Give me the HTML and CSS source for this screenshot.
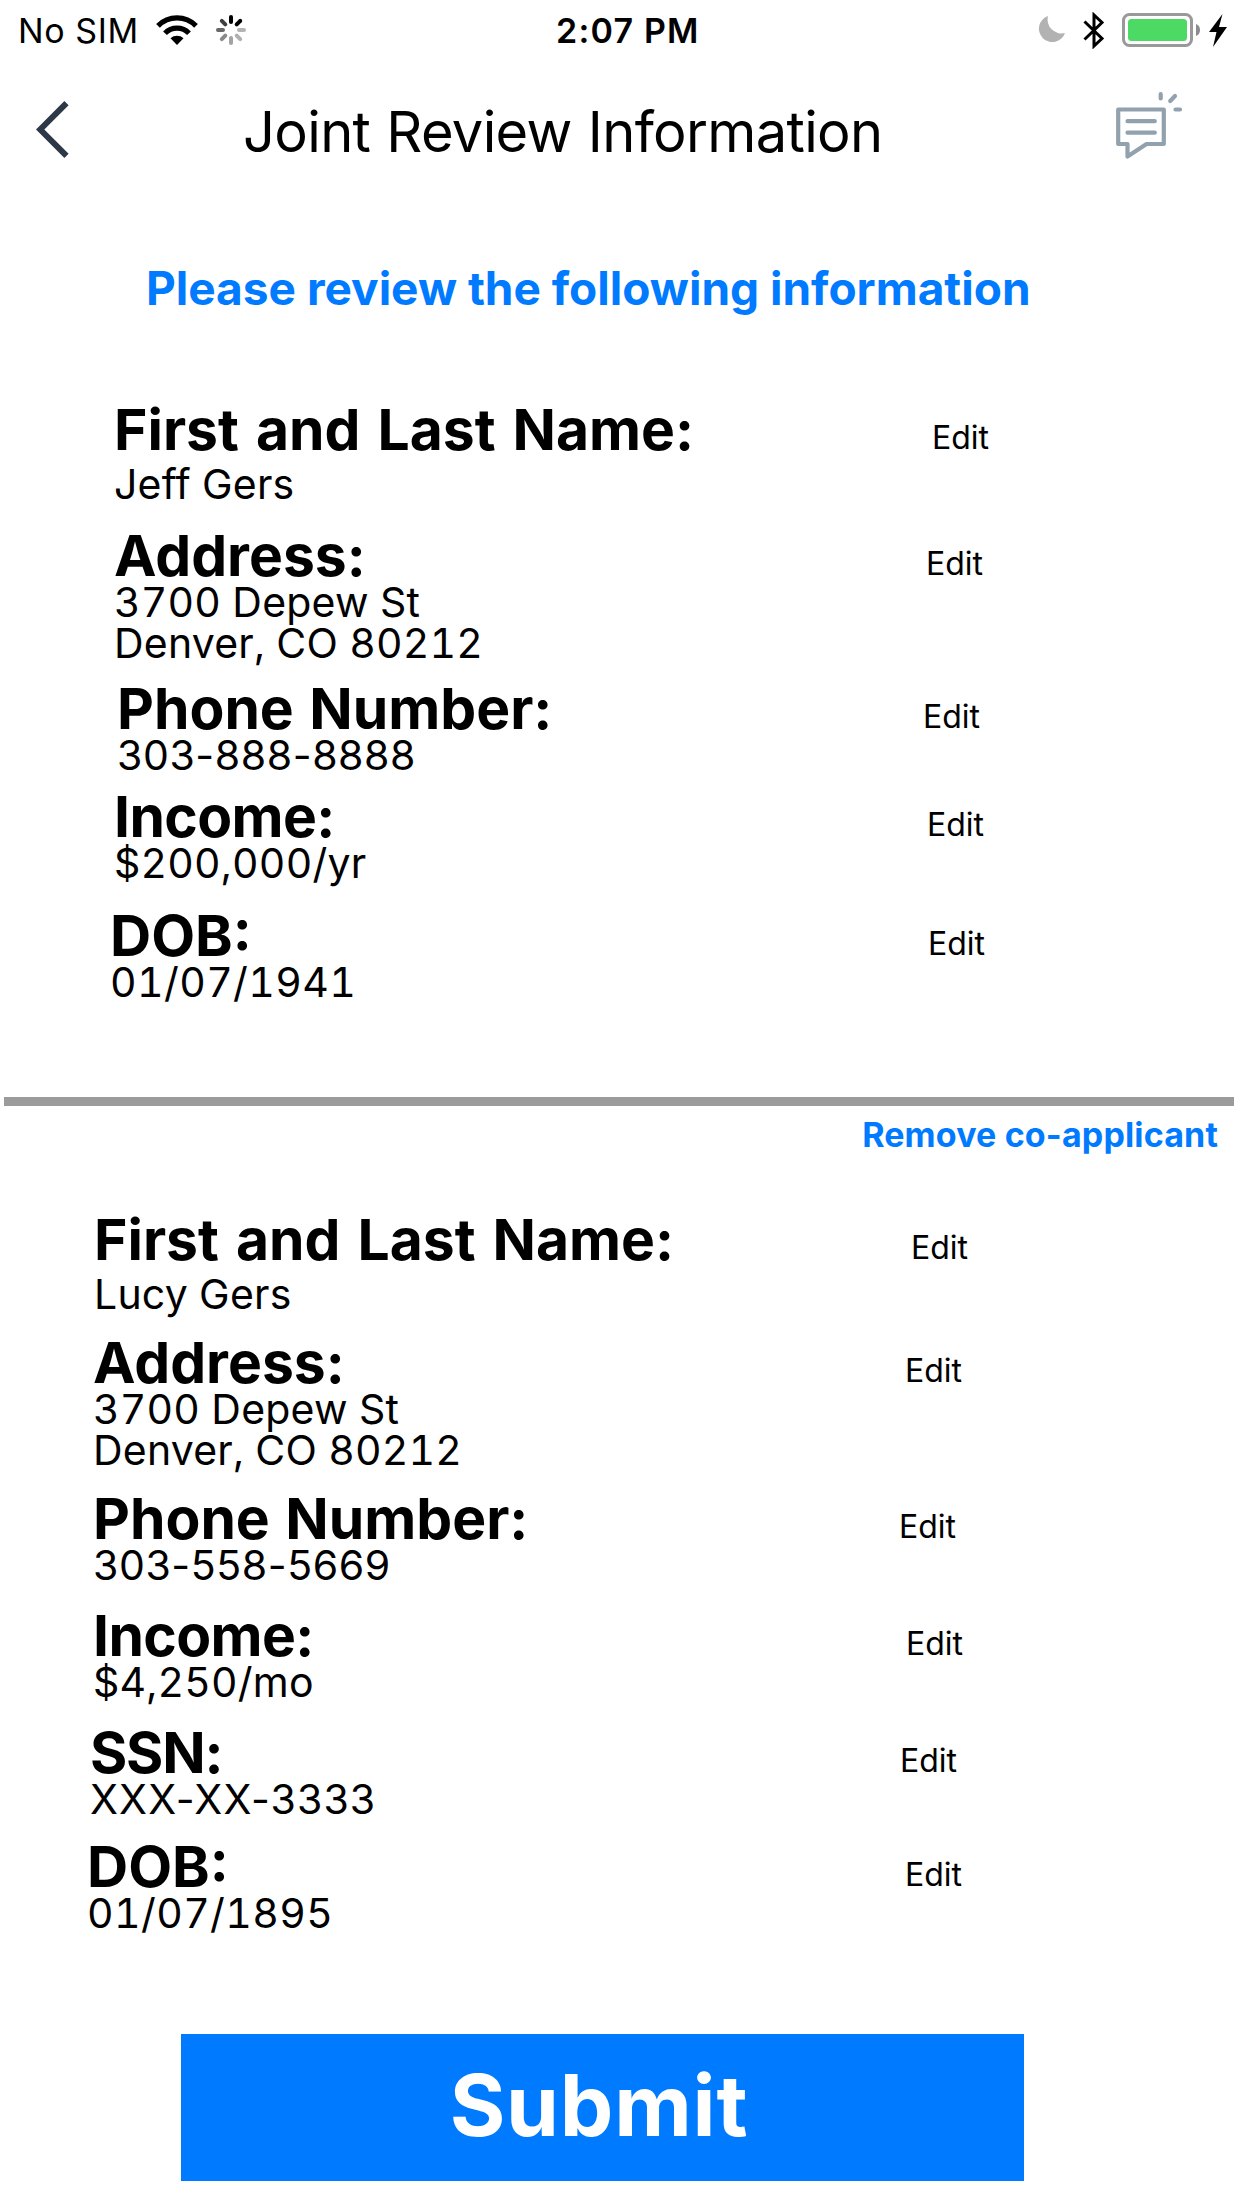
FILE: index.html
```
<!DOCTYPE html>
<html lang="en">
<head>
<meta charset="utf-8">
<title>Joint Review Information</title>
<link rel="stylesheet" href="styles.css">
</head>
<body>
<div class="status">
  <div class="status-left">
    <span class="carrier">No SIM</span>
    <svg class="wifi" width="42" height="30" viewBox="0 0 42 30">
      <g fill="none" stroke="#000" stroke-width="5.2">
        <path d="M2 10.800C12.500 0.200 29.500 0.200 40 10.800"/>
        <path d="M9 18.200C15.500 11.300 26.500 11.300 33 18.200"/>
      </g>
      <path d="M14.500 23.300C18 20 24 20 27.500 23.300L21 30Z"/>
    </svg>
    <svg class="spinner" width="30" height="30" viewBox="0 0 30 30" stroke-width="4" stroke-linecap="round">
      <path d="M15 2V7" stroke="#000"/>
      <path d="M24.200 5.800L20.700 9.300" stroke="#000"/>
      <path d="M23 15H28" stroke="#b4b4b4"/>
      <path d="M20.700 20.700L24.200 24.200" stroke="#b0b0b0"/>
      <path d="M15 23V28" stroke="#a3a3a3"/>
      <path d="M9.300 20.700L5.800 24.200" stroke="#898989"/>
      <path d="M2 15H7" stroke="#686868"/>
      <path d="M5.800 5.800L9.300 9.300" stroke="#404040"/>
    </svg>
  </div>
  <span class="time">2:07 PM</span>
  <div class="status-right">
    <svg class="moon" width="27" height="27" viewBox="0 0 27 27">
      <path d="M10 0A13.400 13.400 0 1 0 27 17A14 14 0 0 1 10 0Z" fill="#b2b2b2"/>
    </svg>
    <svg class="bluetooth" width="22" height="37" viewBox="0 0 22 37">
      <path d="M1.500 9.500L19 26.500L11 34V3L19 10.500L1.500 27.500" fill="none" stroke="#000" stroke-width="3"/>
    </svg>
    <svg class="battery" width="78" height="34" viewBox="0 0 78 34">
      <rect x="1.500" y="1.500" width="68" height="31" rx="6" fill="none" stroke="#999" stroke-width="3"/>
      <rect x="6" y="6" width="59" height="22" rx="3.500" fill="#4cd964"/>
      <path d="M74 11A6.500 6.500 0 0 1 74 23Z" fill="#8c8c8c"/>
    </svg>
    <svg class="bolt" width="18" height="33" viewBox="0 0 18 33">
      <path d="M13.500 0L0 18H7.500L4 33L18 13H10Z"/>
    </svg>
  </div>
</div>

<header class="nav">
  <svg class="back" width="33" height="57" viewBox="0 0 33 57">
    <path d="M30.500 2.200L4.200 28.500L30.500 54.800" fill="none" stroke="#2c3847" stroke-width="6"/>
  </svg>
  <h1 class="title">Joint Review Information</h1>
  <svg class="chat" width="67" height="69" viewBox="0 0 67 69" fill="none" stroke="#92a1ae" stroke-width="4.200" stroke-linecap="round" stroke-linejoin="round">
    <path d="M2.200 18.500H47.800V53H30.500L11.500 65.500V53H2.200Z"/>
    <path d="M11.500 30.200H38.800M11.500 41.700H38.800M44.700 3.200V7.500M54.200 10L59 5M59.500 18.500H64"/>
  </svg>
</header>

<main>
  <h2 class="prompt">Please review the following information</h2>

  <section class="person primary">
    <div class="row name"><div class="info"><h3>First and Last Name:</h3><p>Jeff Gers</p></div><a class="edit">Edit</a></div>
    <div class="row address"><div class="info"><h3>Address:</h3><p>3700 Depew St<br>Denver, CO 80212</p></div><a class="edit">Edit</a></div>
    <div class="row phone"><div class="info"><h3>Phone Number:</h3><p>303-888-8888</p></div><a class="edit">Edit</a></div>
    <div class="row income"><div class="info"><h3>Income:</h3><p>$200,000/yr</p></div><a class="edit">Edit</a></div>
    <div class="row dob"><div class="info"><h3>DOB:</h3><p>01/07/1941</p></div><a class="edit">Edit</a></div>
  </section>

  <hr class="divider">
  <a class="remove">Remove co-applicant</a>

  <section class="person joint">
    <div class="row name"><div class="info"><h3>First and Last Name:</h3><p>Lucy Gers</p></div><a class="edit">Edit</a></div>
    <div class="row address"><div class="info"><h3>Address:</h3><p>3700 Depew St<br>Denver, CO 80212</p></div><a class="edit">Edit</a></div>
    <div class="row phone"><div class="info"><h3>Phone Number:</h3><p>303-558-5669</p></div><a class="edit">Edit</a></div>
    <div class="row income"><div class="info"><h3>Income:</h3><p>$4,250/mo</p></div><a class="edit">Edit</a></div>
    <div class="row ssn"><div class="info"><h3>SSN:</h3><p>XXX-XX-3333</p></div><a class="edit">Edit</a></div>
    <div class="row dob"><div class="info"><h3>DOB:</h3><p>01/07/1895</p></div><a class="edit">Edit</a></div>
  </section>

  <button class="submit" type="button">Submit</button>
</main>
</body>
</html>
```
FILE: styles.css
```
* { box-sizing: border-box; margin: 0; padding: 0; }

body {
  width: 1242px;
  min-height: 2208px;
  background: #fff;
  color: #000;
  font-family: Inter, "Liberation Sans", sans-serif;
  overflow-x: hidden;
}

svg { display: block; flex: none; }

/* Status bar */
.status {
  display: grid;
  grid-template-columns: 556px 1fr auto;
  height: 62px;
  padding-right: 15px;
  font-size: 34px;
  line-height: 62px;
  white-space: nowrap;
}
.status-left, .status-right { display: flex; align-items: flex-start; }
.carrier { width: 137px; padding-left: 18px; letter-spacing: 0.6px; }
.wifi { margin: 15px 0 0 19px; }
.spinner { margin: 15px 0 0 18px; }
.time { font-weight: 600; letter-spacing: 1.2px; }
.moon { margin: 16px 18px 0 0; }
.bluetooth { margin: 12px 17px 0 0; }
.battery { margin: 13px 9px 0 0; }
.bolt { margin-top: 14px; }

/* Navigation bar */
.nav { display: flex; height: 120px; padding: 29px 59px 0 36px; }
.back { margin-top: 10px; }
.title {
  flex: 1;
  padding: 1px 0 0 174px;
  font-size: 56px;
  font-weight: 400;
  line-height: 80px;
  letter-spacing: -0.65px;
  word-spacing: 1px;
}

main { display: flex; flex-direction: column; padding-top: 76px; }

.prompt {
  padding-left: 146px;
  color: #007aff;
  font-size: 46px;
  font-weight: 700;
  line-height: 60px;
}

/* Applicant details */
.primary { margin-top: 86px; }
.joint { margin-top: 59px; }
.row { display: grid; grid-template-columns: var(--edit) auto; align-items: start; }
.info { padding-left: var(--left); }
.row h3 { font-size: 57px; font-weight: 700; line-height: 51px; }
.row p {
  padding-top: 1px;
  font-size: 41px;
  line-height: 41px;
  font-feature-settings: "tnum";
  letter-spacing: 0.2px;
}
.edit { font-size: 32px; line-height: 67px; }
.name h3 { word-spacing: 3.500px; }
.name p { padding-top: 9px; }
.phone h3 { word-spacing: 2px; }
.income h3 { letter-spacing: -0.6px; }
.ssn h3 { letter-spacing: -1.2px; }

.primary .name { --left: 114px; --edit: 932px; }
.primary .address { --left: 114px; --edit: 926px; margin-top: 25px; }
.primary .phone { --left: 117px; --edit: 923px; margin-top: 19px; }
.primary .income { --left: 114px; --edit: 927px; margin-top: 15px; }
.primary .dob { --left: 110px; --edit: 928px; margin-top: 26px; }

.joint .name { --left: 94px; --edit: 911px; }
.joint .address { --left: 93px; --edit: 905px; margin-top: 22px; }
.joint .phone { --left: 93px; --edit: 899px; margin-top: 22px; }
.joint .income { --left: 93px; --edit: 906px; margin-top: 24px; }
.joint .ssn { --left: 90px; --edit: 900px; margin-top: 24px; }
.joint .dob { --left: 87px; --edit: 905px; margin-top: 21px; }

.phone p { font-feature-settings: normal; letter-spacing: 0.6px; }
.ssn p { font-feature-settings: normal; letter-spacing: 1.1px; }
.dob p { letter-spacing: 0.4px; }

.divider { height: 9px; margin: 94px 8px 0 4px; border: 0; background: #9b9b9b; }

.remove {
  align-self: flex-end;
  margin: 9px 24px 0 0;
  color: #007aff;
  font-size: 34px;
  font-weight: 700;
  line-height: 40px;
  letter-spacing: 0.15px;
}

.submit {
  width: 843px;
  height: 147px;
  margin: 100px 0 0 181px;
  padding: 0 7px 3px 0;
  border: 0;
  background: #007aff;
  color: #fff;
  font: 700 85px/140px Inter, sans-serif;
  letter-spacing: 0.8px;
}
```
